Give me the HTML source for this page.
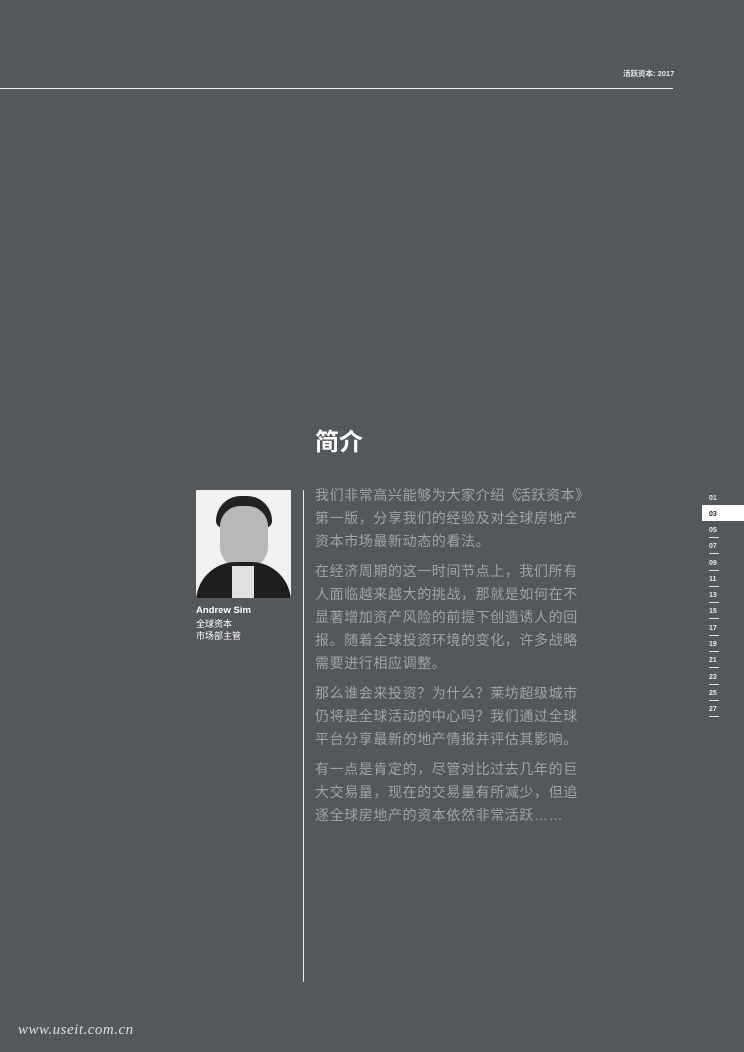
<!DOCTYPE html>
<html><head><meta charset="utf-8"><style>
body{margin:0;width:744px;height:1052px;background:#55585b;position:relative;overflow:hidden;font-family:"Liberation Sans","Noto Sans CJK SC",sans-serif}
.a{position:absolute}
.p{color:#a0a2a4;font-size:14px;line-height:23px;margin:0 0 7px 0;letter-spacing:0.6px;white-space:nowrap}
.n{position:absolute;left:709px;font-size:7px;font-weight:bold;color:#e8e8e8;width:10px}
.u{position:absolute;left:709px;width:10px;height:1px;background:#ddd}
</style></head><body>
<div class="a" style="left:623px;top:68px;font-size:7.5px;color:#e8e8e8;font-weight:bold">活跃资本: 2017</div>
<div class="a" style="left:0;top:88px;width:673px;height:1px;background:#f0f0f0"></div>
<div class="a" style="left:315px;top:422px;font-size:24px;color:#fff;font-weight:bold">简介</div>
<div class="a" style="left:196px;top:490px;width:95px;height:108px;background:#f2f2f2;overflow:hidden">
<div class="a" style="left:20px;top:6px;width:56px;height:32px;border-radius:28px 28px 8px 8px;background:#222"></div>
<div class="a" style="left:24px;top:16px;width:48px;height:64px;border-radius:22px 22px 26px 26px;background:#b8b8b8"></div>
<div class="a" style="left:0;top:72px;width:95px;height:40px;border-radius:40px 40px 0 0;background:#1e1e1e"></div>
<div class="a" style="left:36px;top:76px;width:22px;height:32px;background:#e0e0e0"></div>
</div>
<div class="a" style="left:196px;top:605px;font-size:9.5px;color:#fff;font-weight:bold">Andrew Sim</div>
<div class="a" style="left:196px;top:618px;font-size:9px;line-height:12px;color:#fff">全球资本<br>市场部主管</div>
<div class="a" style="left:303px;top:490px;width:1px;height:492px;background:#eee"></div>
<div class="a" style="left:315px;top:484px;width:268px">
<p class="p">我们非常高兴能够为大家介绍<span style="letter-spacing:-2px">《</span>活跃资本》<br>第一版，分享我们的经验及对全球房地产<br>资本市场最新动态的看法。</p>
<p class="p">在经济周期的这一时间节点上，我们所有<br>人面临越来越大的挑战，那就是如何在不<br>显著增加资产风险的前提下创造诱人的回<br>报。随着全球投资环境的变化，许多战略<br>需要进行相应调整。</p>
<p class="p">那么谁会来投资？为什么？莱坊超级城市<br>仍将是全球活动的中心吗？我们通过全球<br>平台分享最新的地产情报并评估其影响。</p>
<p class="p">有一点是肯定的，尽管对比过去几年的巨<br>大交易量，现在的交易量有所减少，但追<br>逐全球房地产的资本依然非常活跃……</p>
</div>
<div class="n" style="top:495px">01</div>
<div class="a" style="left:702px;top:505px;width:42px;height:16px;background:#fff"></div>
<div class="n" style="top:511px;color:#222">03</div>
<div class="n" style="top:527px">05</div><div class="u" style="top:537px"></div>
<div class="n" style="top:543px">07</div><div class="u" style="top:553px"></div>
<div class="n" style="top:560px">09</div><div class="u" style="top:570px"></div>
<div class="n" style="top:576px">11</div><div class="u" style="top:586px"></div>
<div class="n" style="top:592px">13</div><div class="u" style="top:602px"></div>
<div class="n" style="top:608px">15</div><div class="u" style="top:618px"></div>
<div class="n" style="top:625px">17</div><div class="u" style="top:635px"></div>
<div class="n" style="top:641px">19</div><div class="u" style="top:651px"></div>
<div class="n" style="top:657px">21</div><div class="u" style="top:667px"></div>
<div class="n" style="top:674px">23</div><div class="u" style="top:684px"></div>
<div class="n" style="top:690px">25</div><div class="u" style="top:700px"></div>
<div class="n" style="top:706px">27</div><div class="u" style="top:716px"></div>
<div class="a" style="left:18px;top:1022px;font-size:15px;font-style:italic;color:#ddd;font-family:'Liberation Serif',serif;letter-spacing:0.5px">www.useit.com.cn</div>
</body></html>
